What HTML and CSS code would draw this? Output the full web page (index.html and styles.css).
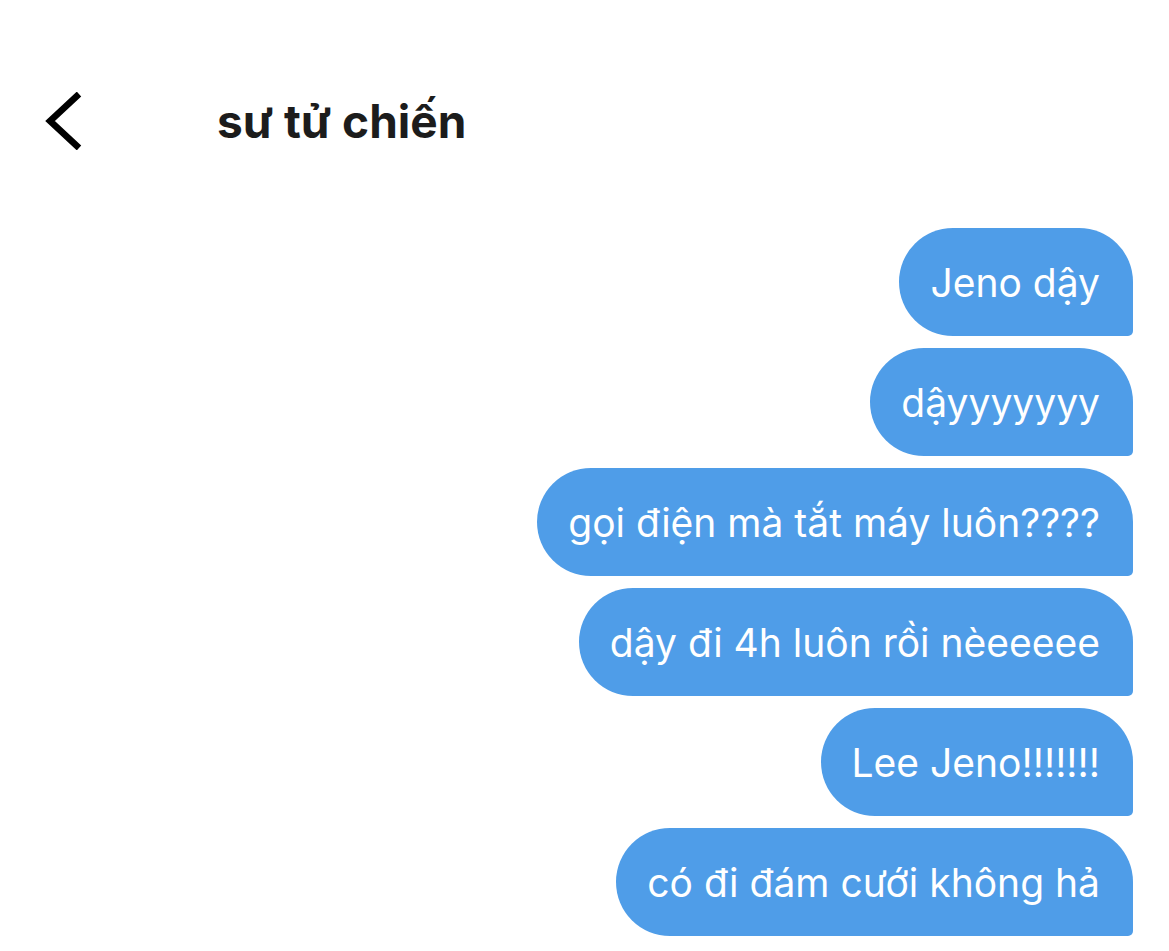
FILE: index.html
```html
<!DOCTYPE html>
<html lang="vi">
    <head>
        <meta charset="UTF-8" />
        <meta name="viewport" content="width=device-width, initial-scale=1.0" />
        <title>sư tử chiến</title>
        <link rel="stylesheet" href="styles.css">
    </head>
    <body>
        <header class="header">
            <button class="back" aria-label="back">
                <svg width="42" height="58" viewBox="0 0 42 58">
                    <path d="M39 2 L10 29 L39 56" fill="none" stroke="#000" stroke-width="6.5" />
                </svg>
            </button>
            <h1 class="title">sư tử chiến</h1>
        </header>
        <div class="chat">
            <div class="bubble">Jeno dậy</div>
            <div class="bubble">dậyyyyyyy</div>
            <div class="bubble">gọi điện mà tắt máy luôn????</div>
            <div class="bubble">dậy đi 4h luôn rồi nèeeeee</div>
            <div class="bubble">Lee Jeno!!!!!!!</div>
            <div class="bubble">có đi đám cưới không hả</div>
        </div>
    </body>
</html>
```

FILE: styles.css
```css
* {
    padding: 0;
    margin: 0;
    box-sizing: border-box;
}
body {
    font-family: Inter, "Noto Sans", sans-serif;
    background-color: #fff;
    width: 1169px;
    height: 951px;
    overflow: hidden;
}
.header {
    display: flex;
    align-items: center;
    height: 150px;
    padding: 92px 0 0 40px;
}
.back {
    all: unset;
    display: flex;
    width: 42px;
    height: 58px;
}
.title {
    margin-left: 135px;
    font-size: 46px;
    font-weight: 700;
    color: #1c1c1c;
}
.chat {
    display: flex;
    flex-direction: column;
    align-items: flex-end;
    gap: 12px;
    padding: 78px 36px 0 0;
}
.bubble {
    height: 108px;
    display: flex;
    align-items: center;
    padding: 0 33px 0 31px;
    background-color: #4f9de8;
    color: #fff;
    font-size: 39px;
    border-radius: 54px 54px 5px 54px;
}
```
